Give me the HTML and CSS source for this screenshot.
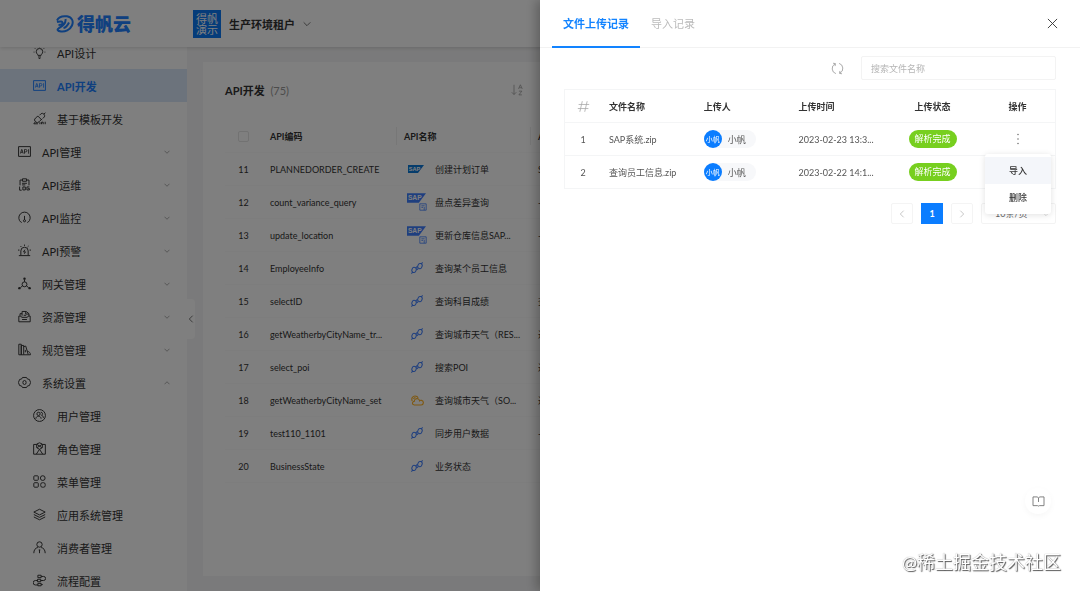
FILE: index.html
```html
<!DOCTYPE html>
<html lang="zh-CN">
<head>
    <meta charset="UTF-8">
    <meta name="viewport" content="width=device-width, initial-scale=1.0">
    <title>API开发</title>
    <link rel="stylesheet" href="styles.css">
</head>
<body>
    <!-- 图标 -->
    <svg class="sprite" aria-hidden="true">
        <symbol id="i-down" viewBox="0 0 12 12"><path d="M1 3.500l5 5 5-5"/></symbol>
        <symbol id="i-up" viewBox="0 0 12 12"><path d="M1 8.500l5-5 5 5"/></symbol>
        <symbol id="i-left" viewBox="0 0 12 12"><path d="M8.500 1l-5 5 5 5"/></symbol>
        <symbol id="i-right" viewBox="0 0 12 12"><path d="M3.500 1l5 5-5 5"/></symbol>
        <symbol id="i-bulb" viewBox="0 0 16 16"><path d="M6 11.500C6 10 4 9.500 4 7a4 4 0 0 1 8 0c0 2.500-2 3-2 4.500zM6.200 13.500h3.600M7 15.300h2M8 .5v1M2.300 2.800l.8.8M13.700 2.800l-.8.8M.8 7.500h1M14.200 7.500h1"/></symbol>
        <symbol id="i-api" viewBox="0 0 16 16"><path d="M.7 2h14.600v12H.7z"/><path class="thin" d="M3 10.500l1.500-5h.4l1.500 5M3.500 9h2.400M8 10.700V5.500h1.500a1.500 1.500 0 0 1 0 3H8M13 5.200v5.500"/></symbol>
        <symbol id="i-template" viewBox="0 0 16 16"><path d="M6 5l5 5M6 5L3 7.500a3 3 0 0 0 0 4.500L1 14.500h5M3 12a3 3 0 0 0 4.500 0L11 8.500M8 4l2-2a3 3 0 0 1 4 4l-2 2M13.700 2.500l1.500-1.700M8.500 15v-2.500M10.500 15v-2.500h2V15M15 12v3"/></symbol>
        <symbol id="i-log" viewBox="0 0 16 16"><path d="M2.500 9V2.500h3M10.500 2.500h3V9M5.500 1h5v3h-5zM5 6.500h6M5 8.500h4M2 10.500V15h2.500M6 11h3v3.700H6zM14 11h-3v3.700h3V13h-1.500"/></symbol>
        <symbol id="i-gauge" viewBox="0 0 16 16"><path d="M4.500 14H3.800a7 7 0 1 1 8.400 0h-.7M8 6v5M6.700 12a1.300 1.300 0 1 0 2.600 0 1.300 1.300 0 0 0-2.600 0"/></symbol>
        <symbol id="i-alarm" viewBox="0 0 16 16"><path d="M3.500 14V8.500a4.500 4.500 0 0 1 9 0V14M1 14.300h14M8.500 7L6.800 9.700h2.400L7.700 12M8 .7v1.600M3 2.500l1.200 1.200M13 2.500l-1.200 1.200M0 7.500h1.800M14.200 7.500H16"/></symbol>
        <symbol id="i-gateway" viewBox="0 0 16 16"><circle cx="8" cy="9" r="3"/><path d="M8 3v3M5.500 11L3 13M10.500 11l2.500 2"/><circle class="dot" cx="8" cy="2" r="1.500"/><circle class="dot" cx="1.700" cy="13.700" r="1.500"/><circle class="dot" cx="14.300" cy="13.700" r="1.500"/></symbol>
        <symbol id="i-resource" viewBox="0 0 16 16"><path d="M1 7.500h2.500l1 1.500h7l1-1.500H15v7H1zM2.500 7V4.500H5M5 7V1.800h5L13.500 4.500v3M9.500 2v3h4M7 6.500h3M5 11.700h6"/></symbol>
        <symbol id="i-books" viewBox="0 0 16 16"><path d="M1 1.500h3v13H1zM4 3h3v11.500H4zM7 4.500l2.500-.7L12.500 14M7 14.500h8.300c0-2.500-1.500-4-4-4.500M9 8.500v3"/></symbol>
        <symbol id="i-gear" viewBox="0 0 16 16"><path d="M5.500 1.800h5l1.200 2 2.300.4L15.500 8 14 11.800l-2.300.4-1.200 2h-5l-1.200-2-2.300-.4L.5 8 2 4.200l2.300-.4z"/><ellipse cx="8" cy="8" rx="2" ry="2.500"/></symbol>
        <symbol id="i-users" viewBox="0 0 16 16"><circle cx="8" cy="8" r="7.300"/><circle cx="6.800" cy="6" r="2"/><path d="M3.500 12c0-4 6.500-4 6.500 0M9.500 4c2.500-.5 3 3 1 3.700 1.500.5 2.300 1.500 2.300 3.300"/></symbol>
        <symbol id="i-role" viewBox="0 0 16 16"><path d="M4.500 3H.8v12h14.400V3h-3.700M4.500 2.500l3.500-1.500 3.500 1.500v4.500l-3.500 2-3.500-2zM5 3l6 4M11 3L5 7M8 9l-4 6M8 9l4 6"/></symbol>
        <symbol id="i-menu" viewBox="0 0 16 16"><rect x="1" y="1" width="5.500" height="5.500" rx="1"/><circle cx="12" cy="3.800" r="2.900"/><rect x="1" y="9.500" width="5.500" height="5.500" rx="1"/><rect x="9.500" y="9.500" width="5.500" height="5.500" rx="2"/></symbol>
        <symbol id="i-layers" viewBox="0 0 16 16"><path d="M8 1.500L15 5 8 8.500 1 5zM1 8l7 3.500L15 8M1 11l7 3.500 7-3.500"/></symbol>
        <symbol id="i-person" viewBox="0 0 16 16"><circle cx="8" cy="4.300" r="3.300"/><path d="M1 15c0-4 2-6.500 5-7M15 15c0-4-2-6.500-5-7M7 11h2M8 11v4"/></symbol>
        <symbol id="i-flow" viewBox="0 0 16 16"><path d="M6 1.500h4v3H6zM10 3h3a2.500 2.500 0 0 1 0 5H9.500M5.500 6.500h4v3h-4zM5.500 8H3a2.500 2.500 0 0 0 0 5.500h3M6 11.500h4v3H6zM10 13h2"/></symbol>
        <symbol id="i-sap" viewBox="0 0 20 12"><path class="fill" d="M0 1h20L12.500 11H0z"/><text x="1" y="8" class="sap-text">SAP</text></symbol>
        <symbol id="i-doc" viewBox="0 0 10 10"><path d="M1 1h8v8H1zM3 3.500h4M3 5.500h2M6.500 5v4"/></symbol>
        <symbol id="i-link" viewBox="0 0 16 16"><rect x="1.500" y="7" width="5.500" height="7" rx="2.700" transform="rotate(20 4 10)"/><rect x="9" y="2" width="5.500" height="7" rx="2.700" transform="rotate(20 12 6)"/><path d="M13.500 2.800L15.500.5M2.500 13.300l-2 2.200M6.500 7.500l2-1.500M7.500 10.500l2-1.500"/></symbol>
        <symbol id="i-cloud" viewBox="0 0 16 16"><path d="M4 13.500h8.500a2.900 2.900 0 0 0 .5-5.700c-1.200-.3-2 0-2.500.5C10 6 7.500 5 5.500 6.300 4.300 7 4 8 4.200 8.800 1 9.500 1 13.200 4 13.500zM1.500 8.500C0 5.500 2 2.500 5 2.500c1.800 0 3.200.8 3.800 2.300M3 6c.5-1.200 1.500-1.500 2.500-1.500"/></symbol>
        <symbol id="i-sort" viewBox="0 0 16 16"><path d="M4 1v13M1 11l3 3 3-3M10 6.500l2.500-5.500L15 6.500M11 5h3M10.500 9.500h4l-4 5h4"/></symbol>
        <symbol id="i-close" viewBox="0 0 12 12"><path d="M1 1l10 10M11 1L1 11"/></symbol>
        <symbol id="i-refresh" viewBox="0 0 16 16"><path d="M6 14.300A6.500 6.500 0 0 1 5 2.300M2.500 1.500l3 .5-.5 3M10 1.700a6.500 6.500 0 0 1 1 12M13.500 14.500l-3-.5.5-3"/></symbol>
        <symbol id="i-hash" viewBox="0 0 16 16"><path d="M6.500 1.500l-3 13M12.500 1.500l-3 13M2 5.500h13M1 10.500h13"/></symbol>
        <symbol id="i-dots" viewBox="0 0 4 12"><circle class="dot" cx="2" cy="1.500" r=".8"/><circle class="dot" cx="2" cy="6" r=".8"/><circle class="dot" cx="2" cy="10.500" r=".8"/></symbol>
        <symbol id="i-book" viewBox="0 0 14 12"><path d="M1 1h4.500L7 2l1.500-1H13v9.500H8L7 11l-1-.5H1zM7 2v4.500"/></symbol>
        <symbol id="i-logo" viewBox="0 0 18 18"><path d="M1 5.500C2.500 2 7 .8 11 1.300c5 .7 6.800 5 5 9.200-2 4.500-7 6.500-11 6-3.500-.5-4.500-2-2-3.500C7 11 10 7.500 9.500 4M1 7c3-1 6-.7 5.500 1.300C6 9.800 4 10 2.500 10M7.500 13c2.500-.5 4-2.500 5.500-5.500"/></symbol>
    </svg>

    <header class="topbar">
        <a class="logo" href="#"><svg><use href="#i-logo"/></svg>得帆云</a>
        <button class="tenant" type="button">
            <span class="tenant-badge">得帆演示</span>
            生产环境租户
            <svg><use href="#i-down"/></svg>
        </button>
    </header>

    <div class="layout">
        <nav class="sidebar">
            <a class="item sub" href="#"><svg><use href="#i-bulb"/></svg>API设计</a>
            <a class="item sub active" href="#"><svg><use href="#i-api"/></svg>API开发</a>
            <a class="item sub" href="#"><svg><use href="#i-template"/></svg>基于模板开发</a>
            <a class="item" href="#"><svg><use href="#i-api"/></svg>API管理<svg class="arrow"><use href="#i-down"/></svg></a>
            <a class="item" href="#"><svg><use href="#i-log"/></svg>API运维<svg class="arrow"><use href="#i-down"/></svg></a>
            <a class="item" href="#"><svg><use href="#i-gauge"/></svg>API监控<svg class="arrow"><use href="#i-down"/></svg></a>
            <a class="item" href="#"><svg><use href="#i-alarm"/></svg>API预警<svg class="arrow"><use href="#i-down"/></svg></a>
            <a class="item" href="#"><svg><use href="#i-gateway"/></svg>网关管理<svg class="arrow"><use href="#i-down"/></svg></a>
            <a class="item" href="#"><svg><use href="#i-resource"/></svg>资源管理<svg class="arrow"><use href="#i-down"/></svg></a>
            <a class="item" href="#"><svg><use href="#i-books"/></svg>规范管理<svg class="arrow"><use href="#i-down"/></svg></a>
            <a class="item" href="#"><svg><use href="#i-gear"/></svg>系统设置<svg class="arrow"><use href="#i-up"/></svg></a>
            <a class="item sub" href="#"><svg><use href="#i-users"/></svg>用户管理</a>
            <a class="item sub" href="#"><svg><use href="#i-role"/></svg>角色管理</a>
            <a class="item sub" href="#"><svg><use href="#i-menu"/></svg>菜单管理</a>
            <a class="item sub" href="#"><svg><use href="#i-layers"/></svg>应用系统管理</a>
            <a class="item sub" href="#"><svg><use href="#i-person"/></svg>消费者管理</a>
            <a class="item sub" href="#"><svg><use href="#i-flow"/></svg>流程配置</a>
        </nav>
        <button class="collapse" type="button" aria-label="收起菜单"><svg><use href="#i-left"/></svg></button>

        <main class="card">
            <div class="card-head">
                <h1>API开发 <span>(75)</span></h1>
                <button class="sort" type="button" aria-label="排序"><svg><use href="#i-sort"/></svg></button>
            </div>
            <table class="table api-table">
                <colgroup><col class="col-no"><col class="col-text"><col class="col-text"><col></colgroup>
                <thead>
                    <tr>
                        <th class="center"><input type="checkbox" aria-label="全选"></th>
                        <th>API编码</th>
                        <th class="split">API名称</th>
                        <th class="split">API描述</th>
                    </tr>
                </thead>
                <tbody>
                    <tr><td class="center">11</td><td>PLANNEDORDER_CREATE</td><td><div class="name"><span class="type sap"><svg><use href="#i-sap"/></svg></span>创建计划订单</div></td><td>SAP</td></tr>
                    <tr><td class="center">12</td><td>count_variance_query</td><td><div class="name"><span class="type sap-doc"><svg><use href="#i-sap"/></svg><svg class="doc"><use href="#i-doc"/></svg></span>盘点差异查询</div></td><td>-</td></tr>
                    <tr><td class="center">13</td><td>update_location</td><td><div class="name"><span class="type sap-doc"><svg><use href="#i-sap"/></svg><svg class="doc"><use href="#i-doc"/></svg></span>更新仓库信息SAP...</div></td><td>-</td></tr>
                    <tr><td class="center">14</td><td>EmployeeInfo</td><td><div class="name"><span class="type"><svg><use href="#i-link"/></svg></span>查询某个员工信息</div></td><td></td></tr>
                    <tr><td class="center">15</td><td>selectID</td><td><div class="name"><span class="type"><svg><use href="#i-link"/></svg></span>查询科目成绩</div></td><td>查询</td></tr>
                    <tr><td class="center">16</td><td>getWeatherbyCityName_tr...</td><td><div class="name"><span class="type"><svg><use href="#i-link"/></svg></span>查询城市天气（RES...</div></td><td>返回</td></tr>
                    <tr><td class="center">17</td><td>select_poi</td><td><div class="name"><span class="type"><svg><use href="#i-link"/></svg></span>搜索POI</div></td><td>返回</td></tr>
                    <tr><td class="center">18</td><td>getWeatherbyCityName_set</td><td><div class="name"><span class="type cloud"><svg><use href="#i-cloud"/></svg></span>查询城市天气（SO...</div></td><td>返回</td></tr>
                    <tr><td class="center">19</td><td>test110_1101</td><td><div class="name"><span class="type"><svg><use href="#i-link"/></svg></span>同步用户数据</div></td><td>-</td></tr>
                    <tr><td class="center">20</td><td>BusinessState</td><td><div class="name"><span class="type"><svg><use href="#i-link"/></svg></span>业务状态</div></td><td></td></tr>
                </tbody>
            </table>
        </main>
    </div>

    <div class="mask"></div>

    <!-- 上传记录抽屉 -->
    <section class="drawer">
        <div class="drawer-head">
            <button class="tab on" type="button">文件上传记录</button>
            <button class="tab" type="button">导入记录</button>
            <button class="close" type="button" aria-label="关闭"><svg><use href="#i-close"/></svg></button>
        </div>
        <div class="drawer-body">
            <div class="tools">
                <button class="refresh" type="button" aria-label="刷新"><svg><use href="#i-refresh"/></svg></button>
                <input class="search" type="text" placeholder="搜索文件名称" aria-label="搜索文件名称">
            </div>
            <table class="table file-table">
                <colgroup><col class="col-index"><col><col><col><col><col class="col-action"></colgroup>
                <thead>
                    <tr>
                        <th class="center"><svg class="hash"><use href="#i-hash"/></svg></th>
                        <th>文件名称</th>
                        <th>上传人</th>
                        <th>上传时间</th>
                        <th class="center">上传状态</th>
                        <th class="center">操作</th>
                    </tr>
                </thead>
                <tbody>
                    <tr>
                        <td class="center">1</td>
                        <td>SAP系统.zip</td>
                        <td><span class="user"><span class="avatar">小帆</span>小帆</span></td>
                        <td>2023-02-23 13:3...</td>
                        <td class="center"><span class="status">解析完成</span></td>
                        <td class="center action">
                            <button class="more" type="button" aria-label="更多"><svg><use href="#i-dots"/></svg></button>
                            <div class="menu">
                                <button class="hover" type="button">导入</button>
                                <button type="button">删除</button>
                            </div>
                        </td>
                    </tr>
                    <tr>
                        <td class="center">2</td>
                        <td>查询员工信息.zip</td>
                        <td><span class="user"><span class="avatar">小帆</span>小帆</span></td>
                        <td>2023-02-22 14:1...</td>
                        <td class="center"><span class="status">解析完成</span></td>
                        <td></td>
                    </tr>
                </tbody>
            </table>
            <div class="pager">
                <button type="button" aria-label="上一页"><svg><use href="#i-left"/></svg></button>
                <button class="current" type="button">1</button>
                <button type="button" aria-label="下一页"><svg><use href="#i-right"/></svg></button>
                <div class="size">
                    <select aria-label="每页条数"><option>10条/页</option></select>
                    <svg><use href="#i-down"/></svg>
                </div>
            </div>
        </div>
    </section>

    <button class="help" type="button" aria-label="帮助文档"><svg><use href="#i-book"/></svg></button>
    <div class="watermark">@稀土掘金技术社区</div>
</body>
</html>
```

FILE: styles.css
```css
* {
    box-sizing: border-box;
}
body {
    margin: 0;
    height: 100vh;
    overflow: hidden;
    display: flex;
    flex-direction: column;
    font-family: Lato, "Noto Sans CJK SC", sans-serif;
    font-size: 9px;
    color: #333;
    background-color: #f5f5f6;
}
button, input, select {
    font-family: inherit;
    font-size: inherit;
    color: inherit;
}
button {
    border: none;
    padding: 0;
    background: none;
    cursor: pointer;
}
a {
    color: inherit;
    text-decoration: none;
}
svg {
    display: block;
    flex: none;
    fill: none;
    stroke: currentColor;
    overflow: visible;
}
.sprite {
    position: absolute;
    width: 0;
    height: 0;
}
.dot, .fill {
    fill: currentColor;
    stroke: none;
}
.thin {
    stroke-width: 1;
}

/* 顶部 */
.topbar {
    position: relative;
    z-index: 1;
    flex: none;
    display: flex;
    align-items: center;
    height: 47px;
    background-color: #fff;
    box-shadow: 0 1px 4px rgba(0, 0, 0, 0.15);
}
.logo {
    display: flex;
    align-items: center;
    gap: 3px;
    width: 193px;
    padding-left: 56px;
    font-size: 18px;
    font-weight: 900;
    line-height: 24px;
    color: #2080ff;
}
.logo svg {
    width: 18px;
    height: 18px;
    stroke-width: 2;
}
.tenant {
    display: flex;
    align-items: center;
    gap: 8px;
    font-size: 11px;
    font-weight: 700;
}
.tenant svg {
    width: 8px;
    height: 8px;
}
.tenant-badge {
    width: 28px;
    height: 28px;
    padding: 3px;
    font-size: 11px;
    font-weight: 400;
    line-height: 11px;
    color: #fff;
    background-color: #0b78f5;
}

/* 侧边菜单 */
.layout {
    flex: 1;
    min-height: 0;
    display: flex;
}
.sidebar {
    flex: none;
    width: 187px;
    margin-top: -11px;
    background-color: #fff;
}
.item {
    display: flex;
    align-items: center;
    gap: 11px;
    height: 33px;
    padding: 0 17px 0 18px;
    font-size: 11px;
}
.item svg {
    width: 13px;
    height: 13px;
    stroke-width: 1.2;
}
.item .arrow {
    width: 6px;
    height: 6px;
    margin-left: auto;
    color: #777;
}
.item.sub {
    padding-left: 33px;
}
.item.active {
    font-weight: 700;
    color: #2080ff;
    background-color: #d8e6f8;
}
.collapse {
    align-self: center;
    display: flex;
    align-items: center;
    justify-content: center;
    width: 8px;
    height: 40px;
    border-radius: 0 4px 4px 0;
    background-color: #fff;
}
.collapse svg {
    width: 8px;
    height: 8px;
}

/* API 列表 */
.card {
    flex: 1;
    min-width: 0;
    margin: 15px 16px 15px 8px;
    padding: 16px 22px;
    background-color: #fff;
}
.card-head {
    display: flex;
    align-items: center;
    height: 24px;
    margin-bottom: 18px;
}
h1 {
    width: 286px;
    margin: 0;
    font-size: 11px;
    font-weight: 700;
}
h1 span {
    margin-left: 3px;
    font-weight: 400;
    color: #999;
}
.sort svg {
    width: 12px;
    height: 12px;
    color: #999;
}
.table {
    width: 100%;
    table-layout: fixed;
    border-collapse: separate;
    border-spacing: 0;
}
.table th, .table td {
    height: 33px;
    padding: 0 8px;
    text-align: left;
    white-space: nowrap;
    border-bottom: 1px solid #f4f5f6;
}
.api-table th, .api-table td {
    border-bottom-color: #fafafa;
}
.table th {
    font-weight: 700;
    color: #333;
}
.table .center {
    padding: 0;
    text-align: center;
}
.col-no {
    width: 37px;
}
.col-text {
    width: 134px;
}
.split {
    background: linear-gradient(#eee, #eee) left center / 1px 18px no-repeat;
}
.api-table input {
    appearance: none;
    display: block;
    width: 11px;
    height: 11px;
    margin: 0 auto;
    border: 1px solid #e4e4e4;
    border-radius: 2px;
}
.name {
    display: flex;
    align-items: center;
    gap: 7px;
}
.type {
    position: relative;
    flex: none;
    display: flex;
    justify-content: center;
    width: 24px;
    padding-left: 2px;
    color: #3f7fff;
}
.type svg {
    width: 12px;
    height: 12px;
    stroke-width: 1.4;
}
.sap, .sap-doc {
    padding: 0;
}
.sap svg {
    width: 16px;
    height: 10px;
    color: #0a78d8;
}
.sap-doc {
    height: 20px;
}
.sap-doc svg {
    width: 19px;
    height: 12px;
}
.sap-doc .doc {
    position: absolute;
    right: 1px;
    bottom: 1px;
    width: 8px;
    height: 8px;
    stroke-width: 1;
}
.sap-text {
    font: 700 7px "Liberation Sans", sans-serif;
    fill: #fff;
    stroke: none;
}
.cloud {
    color: #ffb020;
}
.cloud svg {
    width: 13px;
    height: 13px;
}

/* 抽屉 */
.mask {
    position: fixed;
    inset: 0;
    z-index: 2;
    background-color: rgba(0, 0, 0, 0.5);
}
.drawer {
    position: fixed;
    top: 0;
    right: 0;
    bottom: 0;
    z-index: 3;
    width: 50%;
    background-color: #fff;
    box-shadow: -4px 0 10px rgba(0, 0, 0, 0.25);
}
.drawer-head {
    display: flex;
    height: 48px;
    padding: 0 22px 0 12px;
    border-bottom: 1px solid #f2f2f2;
}
.tab {
    height: 48px;
    padding: 0 11px;
    font-size: 11px;
    color: #bbb;
    border-bottom: 2px solid transparent;
}
.tab.on {
    font-weight: 700;
    color: #1283ff;
    border-bottom-color: #1283ff;
}
.close {
    margin-left: auto;
}
.close svg {
    width: 11px;
    height: 11px;
}
.drawer-body {
    padding: 8px 24px;
}
.tools {
    display: flex;
    justify-content: flex-end;
    align-items: center;
    gap: 17px;
    margin-bottom: 9px;
}
.refresh svg {
    width: 13px;
    height: 13px;
    color: #999;
}
.search {
    width: 195px;
    height: 24px;
    padding: 0 9px;
    border: 1px solid #f3f3f3;
    border-radius: 2px;
    outline: none;
}
.search::placeholder {
    color: #b5b5b5;
}
.file-table {
    border: 1px solid #f4f5f6;
    border-bottom: none;
}
.file-table td {
    color: #555;
}
.file-table .action {
    position: relative;
}
.col-index {
    width: 36px;
}
.col-action {
    width: 75px;
}
.hash {
    width: 13px;
    height: 13px;
    margin: 0 auto;
    stroke-width: 1;
    color: #aaa;
}
.user {
    display: inline-flex;
    align-items: center;
    gap: 6px;
    height: 18px;
    padding-right: 10px;
    border-radius: 9px;
    background-color: #f7f8fa;
    vertical-align: middle;
}
.avatar {
    width: 18px;
    height: 18px;
    border-radius: 50%;
    font-size: 7px;
    line-height: 18px;
    text-align: center;
    color: #fff;
    background-color: #0b7dff;
}
.status {
    display: inline-block;
    padding: 0 6px;
    border-radius: 9px;
    line-height: 18px;
    color: #fff;
    background-color: #77cf1f;
    vertical-align: middle;
}
.more {
    color: #777;
    vertical-align: middle;
}
.more svg {
    width: 4px;
    height: 12px;
}
.menu {
    position: absolute;
    top: 31px;
    right: 4px;
    z-index: 1;
    width: 66px;
    padding: 3px 0;
    border-radius: 3px;
    background-color: #fff;
    box-shadow: 0 1px 6px rgba(0, 0, 0, 0.12);
}
.menu button {
    display: block;
    width: 100%;
    height: 27px;
    font-weight: 500;
    color: #333;
}
.menu .hover {
    background-color: #f4f6fa;
}
.pager {
    display: flex;
    justify-content: flex-end;
    gap: 8px;
    margin-top: 14px;
}
.pager button {
    display: flex;
    align-items: center;
    justify-content: center;
    width: 22px;
    height: 21px;
    border: 1px solid #f4f4f4;
    border-radius: 2px;
    color: #aaa;
}
.pager svg {
    width: 8px;
    height: 8px;
}
.pager .current {
    border: none;
    border-radius: 0;
    font-weight: 700;
    color: #fff;
    background-color: #0b7dff;
}
.size {
    position: relative;
    width: 75px;
}
.size select {
    appearance: none;
    width: 100%;
    height: 21px;
    padding: 0 13px;
    border: 1px solid #f3f3f3;
    border-radius: 2px;
    background-color: #fff;
    color: #666;
}
.size svg {
    position: absolute;
    top: 7px;
    right: 6px;
    color: #ccc;
}

/* 浮层 */
.help {
    position: fixed;
    right: 29px;
    bottom: 77px;
    z-index: 4;
    display: flex;
    align-items: center;
    justify-content: center;
    width: 26px;
    height: 26px;
    border-radius: 50%;
    background-color: #fff;
    box-shadow: 0 2px 6px rgba(0, 0, 0, 0.04);
    color: #777;
}
.help svg {
    width: 13px;
    height: 11px;
}
.watermark {
    position: fixed;
    right: 19px;
    bottom: 17px;
    z-index: 4;
    font-size: 18px;
    color: #fff;
    text-shadow: 1px 1px 1px #555, 0 0 1px #999;
}
```
